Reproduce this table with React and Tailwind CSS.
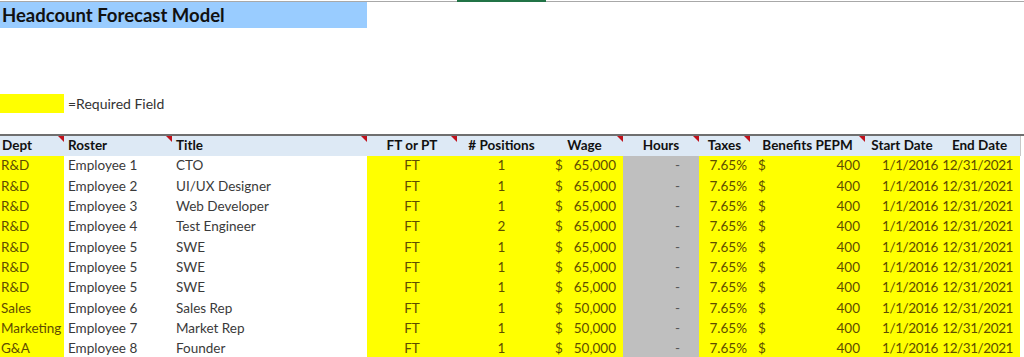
import React from 'react';

const rows = [
  { dept: 'R&D', roster: 'Employee 1', title: 'CTO', pos: 1, wage: '65,000' },
  { dept: 'R&D', roster: 'Employee 2', title: 'UI/UX Designer', pos: 1, wage: '65,000' },
  { dept: 'R&D', roster: 'Employee 3', title: 'Web Developer', pos: 1, wage: '65,000' },
  { dept: 'R&D', roster: 'Employee 4', title: 'Test Engineer', pos: 2, wage: '65,000' },
  { dept: 'R&D', roster: 'Employee 5', title: 'SWE', pos: 1, wage: '65,000' },
  { dept: 'R&D', roster: 'Employee 5', title: 'SWE', pos: 1, wage: '65,000' },
  { dept: 'R&D', roster: 'Employee 5', title: 'SWE', pos: 1, wage: '65,000' },
  { dept: 'Sales', roster: 'Employee 6', title: 'Sales Rep', pos: 1, wage: '50,000' },
  { dept: 'Marketing', roster: 'Employee 7', title: 'Market Rep', pos: 1, wage: '50,000' },
  { dept: 'G&A', roster: 'Employee 8', title: 'Founder', pos: 1, wage: '50,000' },
];

const cols = 'grid grid-cols-[64px_108px_195px_90px_89px_77px_76px_51px_115px_74px_81px_4px]';

// comment marker in the top-right corner of a header cell
const Flag = () => (
  <span className="absolute top-0 right-0 w-0 h-0 border-t-[6px] border-l-[6px] border-t-[#c0121c] border-l-transparent" />
);

const Th = ({ children, align = 'text-center', flag }) => (
  <div className={`relative h-full flex items-center px-[2px] ${align} whitespace-nowrap`}>
    <span className="w-full">{children}</span>
    {flag && <Flag />}
  </div>
);

export default function App() {
  return (
    <div className="w-[1024px] h-[357px] overflow-hidden bg-white font-['Lato',sans-serif] text-[13.5px]">
      {/* sheet column header edge */}
      <div className="flex h-[2px]">
        <div className="w-[457px] border-b border-[#a8a8a8]" />
        <div className="w-[89px] bg-[#217346]" />
        <div className="flex-1 border-b border-[#a8a8a8]" />
      </div>

      <div className="w-[367px] h-[26px] bg-[#99ccff] flex items-center pl-[2px] text-[18.5px] font-bold text-[#111] leading-none">
        Headcount Forecast Model
      </div>

      <div className="mt-[66px] flex items-center h-[19px]">
        <div className="w-[64px] h-full bg-[#ffff00]" />
        <span className="ml-[4px] text-[14px] text-[#333]">=Required Field</span>
      </div>

      <div className="mt-[21px] border-t-2 border-[#6f6f6f]">
        <div className={`${cols} h-[20px] items-center bg-[#dde9f5] font-bold text-[#111] leading-none`}>
          <Th align="text-left" flag>Dept</Th>
          <Th align="text-left pl-[4px]" flag>Roster</Th>
          <Th align="text-left pl-[4px]" flag>Title</Th>
          <Th flag>FT or PT</Th>
          <Th># Positions</Th>
          <Th flag>Wage</Th>
          <Th flag>Hours</Th>
          <Th flag>Taxes</Th>
          <Th flag>Benefits PEPM</Th>
          <Th>Start Date</Th>
          <Th>End Date</Th>
          <div className="h-full border-l border-[#c8c8c8] bg-white" />
        </div>

        {rows.map((r, i) => (
          <div key={i} className={`${cols} h-[20.33px] leading-none`}>
            <div className="bg-[#ffff00] text-[#5e4d00] flex items-center pl-[1px] whitespace-nowrap">{r.dept}</div>
            <div className="text-[#3a3a3a] flex items-center pl-[4px]">{r.roster}</div>
            <div className="text-[#3a3a3a] flex items-center pl-[4px]">{r.title}</div>
            <div className="bg-[#ffff00] text-[#5e4d00] flex items-center justify-center">FT</div>
            <div className="bg-[#ffff00] text-[#5e4d00] flex items-center justify-center">{r.pos}</div>
            <div className="bg-[#ffff00] text-[#5e4d00] flex items-center justify-between pl-[9px] pr-[7px]">
              <span>$</span>
              <span>{r.wage}</span>
            </div>
            <div className="bg-[#bfbfbf] text-[#555] flex items-center justify-end pr-[19px]">-</div>
            <div className="bg-[#ffff00] text-[#5e4d00] flex items-center justify-end pr-[3px]">7.65%</div>
            <div className="bg-[#ffff00] text-[#5e4d00] flex items-center justify-between pl-[8px] pr-[5px]">
              <span>$</span>
              <span>400</span>
            </div>
            <div className="bg-[#ffff00] text-[#5e4d00] flex items-center justify-end pr-[1px] tracking-[-0.03em]">1/1/2016</div>
            <div className="bg-[#ffff00] text-[#5e4d00] flex items-center justify-end pr-[7px] tracking-[-0.03em]">12/31/2021</div>
            <div className="bg-white" />
          </div>
        ))}
      </div>
    </div>
  );
}
